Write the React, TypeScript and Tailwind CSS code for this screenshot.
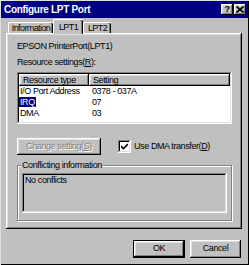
import React from "react";

const raised =
  "shadow-[inset_-1px_-1px_#000000,inset_1px_1px_#ffffff,inset_-2px_-2px_#808080,inset_2px_2px_#dfdfdf]";
const sunken =
  "shadow-[inset_-1px_-1px_#ffffff,inset_1px_1px_#808080,inset_-2px_-2px_#dfdfdf,inset_2px_2px_#000000]";

const ROWS = [
  { type: "I/O Port Address", setting: "0378 - 037A" },
  { type: "IRQ", setting: "07", selected: true },
  { type: "DMA", setting: "03" },
];

function TitleButton({ children }: { children: React.ReactNode }) {
  return (
    <div
      className={`flex h-[11px] w-[12px] items-center justify-center bg-[#c0c0c0] text-[9px] font-bold leading-none text-black ${raised}`}
    >
      {children}
    </div>
  );
}

function Tab({ label, width, active }: { label: string; width: string; active?: boolean }) {
  return (
    <div
      className={
        active
          ? `relative z-10 -mb-[1px] flex h-[15px] items-center justify-center rounded-t-[2px] border-l border-t border-white bg-[#c0c0c0] shadow-[inset_-1px_0_#000000,inset_-2px_0_#808080] ${width}`
          : `flex h-[11px] items-center justify-center rounded-t-[2px] border-l border-t border-white bg-[#c0c0c0] shadow-[inset_-1px_0_#000000,inset_-2px_0_#808080] ${width}`
      }
    >
      <span className="leading-none tracking-[-0.6px]">{label}</span>
    </div>
  );
}

export default function App() {
  return (
    <div className="h-[265px] w-[249px] overflow-hidden bg-[#c0c0c0] font-['Liberation_Sans',Arial,sans-serif] text-[9px] tracking-[-0.4px] text-black shadow-[inset_1px_1px_#dfdfdf,inset_-1px_-1px_#000000]">
      <div className="mx-[1px] mt-[1px] flex h-[17px] items-center bg-[#000080] pl-[3px] pr-[2px]">
        <span className="text-[10px] font-bold tracking-[-0.3px] text-white">Configure LPT Port</span>
        <div className="ml-auto flex gap-[1px]">
          <TitleButton>?</TitleButton>
          <TitleButton>
            <svg width="8" height="7" viewBox="0 0 8 7">
              <path d="M0.5 0.5 L7.5 6.5 M7.5 0.5 L0.5 6.5" stroke="#000" strokeWidth="1.6" />
            </svg>
          </TitleButton>
        </div>
      </div>

      <div className="mt-[1px] flex h-[14px] items-end pl-[8px]">
        <Tab label="Information" width="w-[45px]" />
        <Tab label="LPT1" width="w-[30px]" active />
        <Tab label="LPT2" width="w-[28px]" />
      </div>

      <div className={`ml-[6px] flex h-[196px] w-[236px] flex-col pl-[11px] pr-[10px] pt-[8px] ${raised}`}>
        <div className="leading-[11px]">EPSON PrinterPort(LPT1)</div>
        <div className="mt-[5px] leading-[11px]">
          Resource settings(<u>R</u>):
        </div>

        <div className={`mt-[4px] h-[52px] bg-white p-[2px] ${sunken}`}>
          <div className="flex h-[12px] leading-[12px]">
            <div className={`w-[70px] bg-[#c0c0c0] pl-[4px] ${raised}`}>Resource type</div>
            <div className={`flex-1 bg-[#c0c0c0] pl-[4px] ${raised}`}>Setting</div>
          </div>
          {ROWS.map((r) => (
            <div key={r.type} className="flex leading-[11px]">
              <div className="w-[70px]">
                <span className={r.selected ? "bg-[#000080] px-[1px] text-white" : "px-[1px]"}>{r.type}</span>
              </div>
              <div className="pl-[3px]">{r.setting}</div>
            </div>
          ))}
        </div>

        <div className="mt-[14px] flex h-[17px] items-center">
          <div
            className={`flex h-[17px] w-[84px] items-center justify-center bg-[#c0c0c0] text-[#808080] [text-shadow:1px_1px_0_#ffffff] ${raised}`}
          >
            Change setting(<u>S</u>)
          </div>
          <div className={`ml-[17px] flex h-[13px] w-[13px] items-center justify-center bg-white ${sunken}`}>
            <svg width="7" height="7" viewBox="0 0 7 7">
              <path d="M0 3 L2.5 5.5 L7 1" stroke="#000" strokeWidth="1.6" fill="none" />
            </svg>
          </div>
          <span className="ml-[3px]">
            Use DMA transfer(<u>D</u>)
          </span>
        </div>

        <div className="relative mt-[10px] h-[56px] border border-[#808080] px-[4px] pt-[7px] shadow-[1px_1px_#ffffff,inset_1px_1px_#ffffff]">
          <span className="absolute -top-[6px] left-[3px] bg-[#c0c0c0] px-[1px] leading-[11px]">Conflicting information</span>
          <div className={`h-[40px] bg-[#c0c0c0] px-[3px] pt-[2px] leading-[11px] ${sunken}`}>No conflicts</div>
        </div>
      </div>

      <div className="mt-[11px] flex justify-end gap-[5px] pr-[8px]">
        <div className="h-[18px] w-[52px] border border-black">
          <div className={`flex h-full items-center justify-center ${raised}`}>OK</div>
        </div>
        <div className={`flex h-[18px] w-[51px] items-center justify-center ${raised}`}>Cancel</div>
      </div>
    </div>
  );
}
